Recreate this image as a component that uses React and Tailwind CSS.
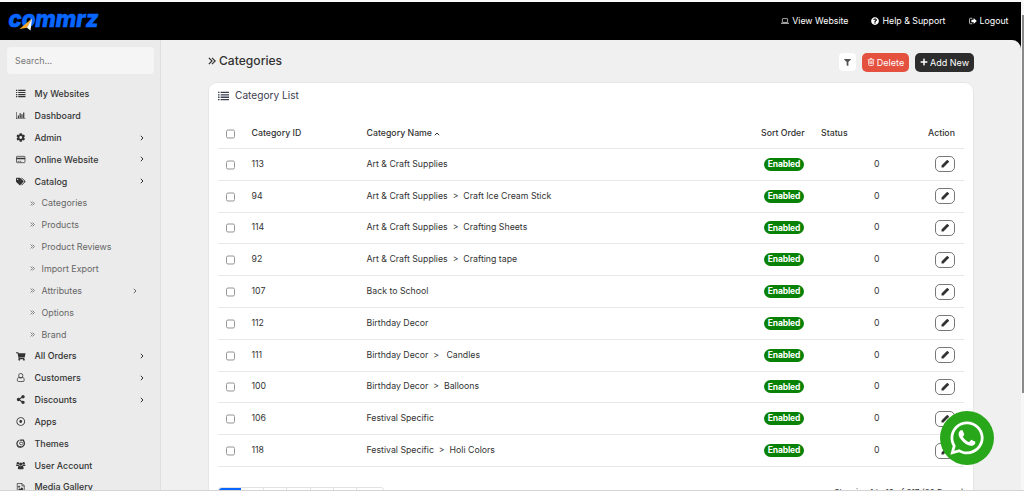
import { FaCog, FaFilter, FaPlus, FaQuestionCircle, FaRegDotCircle, FaShareAlt, FaShoppingCart, FaTags, FaWhatsapp } from "react-icons/fa";

function ListIcon({ className }) {
  return (
    <svg viewBox="0 0 16 14" fill="currentColor" className={className}>
      <path d="M0 .8h2.200V2.800H0zM3.800.8H16V2.800H3.800zM0 4.300h2.200v2H0zM3.800 4.300H16v2H3.800zM0 7.800h2.200v2H0zM3.800 7.800H16v2H3.800zM0 11.300h2.200v2H0zM3.800 11.300H16v2H3.800z" />
    </svg>
  );
}

function DoubleAngleIcon({ className }) {
  return (
    <svg viewBox="0 0 14 14" fill="none" stroke="currentColor" strokeWidth="2.100" className={className}>
      <path d="m1.500 1.500 5.500 5.500-5.500 5.500M7 1.500 12.500 7 7 12.500" />
    </svg>
  );
}

function AngleIcon({ className }) {
  return (
    <svg viewBox="0 0 8 8" fill="none" stroke="currentColor" strokeWidth="1" className={className}>
      <path d="M2.800 1.800 5 4 2.800 6.200" />
    </svg>
  );
}

function ChartIcon({ className }) {
  return (
    <svg viewBox="0 0 2048 1792" fill="currentColor" className={className}>
      <path d="M640 896v512H384V896zm384-512v1024H768V384zm1024 1152v128H0V128h128v1408zm-640-896v768h-256V640zm384-384v1152h-256V256z" />
    </svg>
  );
}

function CardIcon({ className }) {
  return (
    <svg viewBox="0 0 18 14" fill="none" stroke="currentColor" strokeWidth="1.400" className={className}>
      <rect x="1" y="1" width="16" height="12" rx="1.200" />
      <path d="M1 5.200h16" strokeWidth="3" />
      <path d="M3 10.500h2.500M6.500 10.500H10" />
    </svg>
  );
}

function UserIcon({ className }) {
  return (
    <svg viewBox="0 0 16 16" fill="none" stroke="currentColor" strokeWidth="1.400" className={className}>
      <ellipse cx="8" cy="4.800" rx="3.700" ry="4.100" />
      <path d="M4.600 7.400C2.600 8 1.900 10.500 1.900 13c0 1.300.8 2.200 2 2.200h8.200c1.200 0 2-.9 2-2.200 0-2.500-.7-5-2.700-5.600M4.600 8.200h6.800" />
    </svg>
  );
}

function ThemeIcon({ className }) {
  return (
    <svg viewBox="0 0 16 16" fill="none" stroke="currentColor" strokeWidth="2.200" className={className}>
      <path d="M5.500 2.200A6.300 6.300 0 0 0 3.500 13M6 14.200A6.600 6.600 0 0 0 13.500 4.500" />
      <path d="M6.500 1.800h6.200l1.200 3.500M2 11.500l2 2.700h4.500" />
      <path d="M6.500 5.500h4L12 8.300 9.500 10.800 6 9z" strokeWidth="1.300" />
    </svg>
  );
}

function UsersIcon({ className }) {
  return (
    <svg viewBox="0 0 20 16" fill="currentColor" className={className}>
      <circle cx="4" cy="3.200" r="2.600" />
      <circle cx="16" cy="3.200" r="2.600" />
      <circle cx="10" cy="5" r="3.500" />
      <path d="M0 7.500C0 6 .8 5.800 1.800 5.800c1.200.7 3 .9 4 .4 0 1.400.4 2.200 1.200 3H1.500C.5 9.200 0 8.700 0 7.500zM20 7.500c0-1.500-.8-1.700-1.800-1.700-1.200.7-3 .9-4 .4 0 1.400-.4 2.200-1.200 3h5.500c1 0 1.500-.5 1.500-1.700zM4 13.700c0-3 .9-5 2.800-5 1.800 1.400 4.600 1.400 6.400 0 1.900 0 2.800 2 2.800 5 0 1.500-1 2.300-2.300 2.300H6.300C5 16 4 15.200 4 13.700z" />
    </svg>
  );
}

function ImageIcon({ className }) {
  return (
    <svg viewBox="0 0 14 16" fill="none" stroke="currentColor" strokeWidth="1.300" className={className}>
      <path d="M.8.8h8.400l4 4v10.400H.8zM9 .8V5h4.200" />
      <circle cx="4" cy="6.500" r="1.200" fill="currentColor" />
      <path d="M3 12.500v-1.800l1.500-1.500L6 10.500l3-3 2.200 2.500v2.500z" fill="currentColor" stroke="none" />
    </svg>
  );
}

function LaptopIcon({ className }) {
  return (
    <svg viewBox="0 0 20 16" fill="none" stroke="currentColor" strokeWidth="1.600" className={className}>
      <rect x="3.500" y="2" width="13" height="9.500" rx="1" />
      <path d="M0 13.700h20" strokeWidth="2" />
    </svg>
  );
}

function LogoutIcon({ className }) {
  return (
    <svg viewBox="0 0 16 16" fill="none" stroke="currentColor" strokeWidth="1.500" className={className}>
      <path d="M6.500 2.500H3A2 2 0 0 0 1 4.500v7a2 2 0 0 0 2 2h3.500" />
      <path d="M9.300 2.200 15.600 8l-6.300 5.800v-3.500H4.800V5.700h4.500z" fill="currentColor" stroke="none" />
    </svg>
  );
}

function TrashIcon({ className }) {
  return (
    <svg viewBox="0 0 14 16" fill="none" stroke="currentColor" strokeWidth="1.500" className={className}>
      <path d="M.5 3.600h13M4.500 3.300 5.200 1h3.600l.7 2.300M2.300 3.600v9.800c0 .9.500 1.600 1.200 1.600h7c.7 0 1.200-.7 1.200-1.600V3.600M4.900 6.200v6M7 6.200v6M9.100 6.200v6" />
    </svg>
  );
}

function PencilIcon({ className }) {
  return (
    <svg viewBox="0 0 16 16" fill="currentColor" className={className}>
      <path d="M1 15v-4l8.800-8.800 4 4L5 15zM9.800 2.200l1.800-1.700c.6-.6 1.400-.6 2 0l2 2c.6.600.6 1.400 0 2l-1.800 1.700z" />
    </svg>
  );
}

const topLinks = [
  { label: "View Website", icon: LaptopIcon },
  { label: "Help & Support", icon: FaQuestionCircle },
  { label: "Logout", icon: LogoutIcon },
];

const menu = [
  { label: "My Websites", icon: ListIcon },
  { label: "Dashboard", icon: ChartIcon },
  { label: "Admin", icon: FaCog, arrow: true },
  { label: "Online Website", icon: CardIcon, arrow: true },
  { label: "Catalog", icon: FaTags, arrow: true },
  { label: "Categories", child: true },
  { label: "Products", child: true },
  { label: "Product Reviews", child: true },
  { label: "Import Export", child: true },
  { label: "Attributes", child: true, arrow: true },
  { label: "Options", child: true },
  { label: "Brand", child: true },
  { label: "All Orders", icon: FaShoppingCart, arrow: true },
  { label: "Customers", icon: UserIcon, arrow: true },
  { label: "Discounts", icon: FaShareAlt, arrow: true },
  { label: "Apps", icon: FaRegDotCircle },
  { label: "Themes", icon: ThemeIcon },
  { label: "User Account", icon: UsersIcon },
  { label: "Media Gallery", icon: ImageIcon },
];

const categories = [
  { id: 113, name: "Art & Craft Supplies" },
  { id: 94, name: "Art & Craft Supplies  >  Craft Ice Cream Stick" },
  { id: 114, name: "Art & Craft Supplies  >  Crafting Sheets" },
  { id: 92, name: "Art & Craft Supplies  >  Crafting tape" },
  { id: 107, name: "Back to School" },
  { id: 112, name: "Birthday Decor" },
  { id: 111, name: "Birthday Decor  >   Candles" },
  { id: 100, name: "Birthday Decor  >  Balloons" },
  { id: 106, name: "Festival Specific" },
  { id: 118, name: "Festival Specific  >  Holi Colors" },
];

function Logo() {
  return (
    <svg width="100" height="36" viewBox="0 0 100 36" className="ml-[8px]">
      <text x="0.500" y="24" textLength="90" lengthAdjust="spacingAndGlyphs" fontFamily="Inter" fontSize="23.500" fontWeight="800" fontStyle="italic" fill="#0866ff" stroke="#0866ff" strokeWidth="0.700">
        commrz
      </text>
      <path d="M24 15.500 11.500 26l7.500-1.200z" fill="#f9a92b" />
      <path d="M24 15.500 22.500 27.500l-3.500-2.700z" fill="#fff" />
    </svg>
  );
}

function Checkbox() {
  return <input type="checkbox" className="block size-[9px] translate-y-[0.500px] appearance-none rounded-[2px] border border-[#959595] bg-white" />;
}

function MenuItem({ item }) {
  const Icon = item.icon;
  if (item.child) {
    return (
      <li className="flex h-[21.850px] items-center pl-[30px] pr-[21px] text-[8.900px] text-[#666]">
        <DoubleAngleIcon className="mr-[6.500px] size-[5px]" />
        <span>{item.label}</span>
        {item.arrow ? <AngleIcon className="ml-auto size-[8px]" /> : null}
      </li>
    );
  }
  return (
    <li className="flex h-[21.850px] items-center pl-4 pr-[15px] font-medium text-[#333]">
      <span className="w-[18.500px]">
        <Icon className="h-[9px] w-[9.500px]" />
      </span>
      <span>{item.label}</span>
      {item.arrow ? <AngleIcon className="ml-auto mr-[-1px] size-[8px]" /> : null}
    </li>
  );
}

function CategoryTable() {
  return (
    <div className="mx-[9px] mt-[10px] text-[8.750px] text-[#333]">
      <div className="flex h-[30px] items-center border-b border-[#e8e8e8] font-medium">
        <div className="w-[33.500px] pl-2">
          <Checkbox />
        </div>
        <div className="w-[115px]">Category ID</div>
        <div className="flex flex-1 items-center gap-[1px]">
          Category Name <AngleIcon className="size-[8px] -rotate-90" />
        </div>
        <div className="w-[60px]">Sort Order</div>
        <div className="w-[107px]">Status</div>
        <div className="w-[36px]">Action</div>
      </div>
      {categories.map((category) => (
        <div key={category.id} className="flex h-[31.800px] items-center border-b border-[#e8e8e8]">
          <div className="w-[33.500px] pl-2">
            <Checkbox />
          </div>
          <div className="w-[115px]">{category.id}</div>
          <div className="flex-1 whitespace-pre">{category.name}</div>
          <div className="w-[60px] pl-[3px]">
            <span className="flex h-[13px] w-[40px] items-center justify-center rounded-full bg-[#078207] text-[8.500px] font-bold tracking-[-0.150px] text-white">Enabled</span>
          </div>
          <div className="w-[107px] pl-[53px]">0</div>
          <div className="w-[36px] pl-[7px]">
            <button type="button" className="flex h-4 w-5 items-center justify-center rounded-[5px] border border-[#777]">
              <PencilIcon className="size-[8px]" />
            </button>
          </div>
        </div>
      ))}
    </div>
  );
}

export default function App() {
  return (
    <div className="relative flex h-[491px] w-[1024px] overflow-hidden border-t-2 border-[#fafafa] bg-white font-['Inter',sans-serif] text-[#333]">
      <div className="flex w-[1021px] flex-col bg-black">
        <header className="flex h-[37.500px] shrink-0 items-center">
          <Logo />
          <nav className="ml-auto flex items-center gap-[23px] pr-[12.500px] text-[8.800px] text-white">
            {topLinks.map(({ label, icon: Icon }) => (
              <a key={label} href="#" className="flex items-center gap-[3px]">
                <Icon className="size-[8px]" />
                {label}
              </a>
            ))}
          </nav>
        </header>

        <div className="flex min-h-0 flex-1 overflow-hidden rounded-tr-[9px] bg-[#f0f0f0]">
          <aside className="w-[161px] shrink-0 border-r border-[#dfdfdf] bg-[#ebebeb] text-[8.900px]">
            <input placeholder="Search..." className="ml-[7px] mt-[7.500px] block h-[27px] w-[147px] rounded-[4px] bg-[#f5f5f5] px-2 text-[8.900px] placeholder:text-[#777]" />
            <ul className="mt-[9px]">
              {menu.map((item) => (
                <MenuItem key={item.label} item={item} />
              ))}
            </ul>
          </aside>

          <main className="flex min-w-0 flex-1 flex-col px-[47px]">
            <div className="flex h-[42.500px] shrink-0 items-center">
              <h1 className="flex items-center gap-[3px] text-[12.100px] font-medium">
                <DoubleAngleIcon className="size-[8px]" />
                Categories
              </h1>
              <div className="ml-auto mt-[3px] flex items-center gap-[6px] text-[9px] text-white">
                <button type="button" className="flex h-[18px] w-[17px] items-center justify-center rounded-[4px] bg-white text-[#555]">
                  <FaFilter className="size-[7px]" />
                </button>
                <button type="button" className="flex h-[19px] w-[47px] items-center justify-center gap-[2px] rounded-[5px] bg-[#e5513f]">
                  <TrashIcon className="size-[8px]" /> Delete
                </button>
                <button type="button" className="flex h-[19px] w-[59px] items-center justify-center gap-[2px] rounded-[5px] bg-[#2d2d2d]">
                  <FaPlus className="size-[8px]" /> Add New
                </button>
              </div>
            </div>

            <section className="h-[420px] shrink-0 rounded-t-[9px] border border-[#e6e6e6] bg-white">
              <h2 className="flex h-[26px] items-center gap-[6px] pl-[9px] text-[10.150px] text-[#3d4050]">
                <ListIcon className="h-[10px] w-[11px]" />
                Category List
              </h2>
              <CategoryTable />
              <div className="mx-[9px] mt-[20px] flex items-start justify-between">
                <div className="flex h-5 w-[166px] rounded-[3px] border border-[#e2e2e2]">
                  <span className="w-[22px] rounded-l-[3px] bg-[#0866ff]" />
                  {[23, 23, 24, 23, 23].map((width, index) => (
                    <span key={index} className="border-r border-[#e2e2e2]" style={{ width }} />
                  ))}
                </div>
                <span className="mt-[-1px] text-[8.200px]">Showing 1 to 10 of 217 (22 Pages)</span>
              </div>
            </section>
          </main>
        </div>
      </div>

      <div className="flex flex-1 flex-col items-center bg-[#f7f7f7] pt-[13px]">
        <div className="h-[378px] w-[2px] bg-[#8a8a8a]" />
      </div>

      <a href="#" aria-label="WhatsApp" className="absolute left-[940px] top-[409px] flex size-[54px] items-center justify-center rounded-full bg-[#29a71a] text-white">
        <FaWhatsapp className="size-[38px]" />
      </a>
      <div className="absolute inset-x-0 bottom-0 h-px bg-[#d4d4d4]" />
    </div>
  );
}
